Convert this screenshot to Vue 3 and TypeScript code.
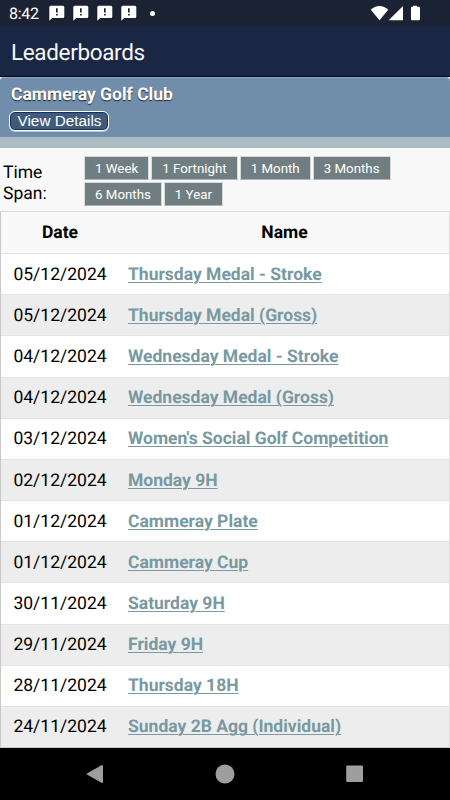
<script setup lang="ts">
interface Competition {
  date: string
  name: string
}

const notifications = [1, 2, 3, 4]
const spans: string[] = ['1 Week', '1 Fortnight', '1 Month', '3 Months', '6 Months', '1 Year']
const competitions: Competition[] = [
  { date: '05/12/2024', name: 'Thursday Medal - Stroke' },
  { date: '05/12/2024', name: 'Thursday Medal (Gross)' },
  { date: '04/12/2024', name: 'Wednesday Medal - Stroke' },
  { date: '04/12/2024', name: 'Wednesday Medal (Gross)' },
  { date: '03/12/2024', name: "Women's Social Golf Competition" },
  { date: '02/12/2024', name: 'Monday 9H' },
  { date: '01/12/2024', name: 'Cammeray Plate' },
  { date: '01/12/2024', name: 'Cammeray Cup' },
  { date: '30/11/2024', name: 'Saturday 9H' },
  { date: '29/11/2024', name: 'Friday 9H' },
  { date: '28/11/2024', name: 'Thursday 18H' },
  { date: '24/11/2024', name: 'Sunday 2B Agg (Individual)' },
]
</script>

<template>
  <div class="screen">
    <div class="status">
      <span class="clock">8:42</span>
      <svg v-for="n in notifications" :key="n" class="note" viewBox="0 0 16 16">
        <path d="M1.800 .8h12a1.500 1.500 0 0 1 1.500 1.500v9.300a1.500 1.500 0 0 1-1.500 1.500H3.300L.3 15.800V2.300A1.500 1.500 0 0 1 1.800 .8Z" fill="#fff" />
        <path d="M7 3.200h1.700v4.300H7zM7 9h1.700v1.600H7z" fill="#1b2233" />
      </svg>
      <span class="dot"></span>
      <svg class="signals" viewBox="0 0 52 16">
        <path d="M.8 4.800C5.500-.4 13.500-.4 18.200 4.800L9.500 15.300Z" fill="#fff" />
        <path d="M33 1V15.300H18.700Z" fill="#fff" />
        <path d="M43 .8h4v1h1.700c.8 0 1.300.5 1.300 1.300v10.900c0 .8-.5 1.300-1.300 1.300h-6.400c-.8 0-1.300-.5-1.300-1.300V3.100c0-.8.5-1.300 1.300-1.300H43Z" fill="#fff" />
      </svg>
    </div>
    <header class="appbar">Leaderboards</header>
    <section class="club">
      <h1>Cammeray Golf Club</h1>
      <button type="button">View Details</button>
    </section>
    <div class="strip"></div>
    <section class="filter">
      <div class="label">Time Span:</div>
      <div class="spans">
        <button v-for="s in spans" :key="s" type="button">{{ s }}</button>
      </div>
    </section>
    <div class="board">
      <div class="row head">
        <div class="date">Date</div>
        <div class="name">Name</div>
      </div>
      <div v-for="(c, i) in competitions" :key="i" class="row">
        <div class="date">{{ c.date }}</div>
        <div class="name"><a>{{ c.name }}</a></div>
      </div>
    </div>
    <nav class="nav">
      <svg viewBox="0 0 20 20"><path d="M17 2v16L2.800 10Z" fill="#9e9e9e" stroke="#9e9e9e" stroke-width="2" stroke-linejoin="round" /></svg>
      <svg viewBox="0 0 20 20"><circle cx="10" cy="10" r="9.500" fill="#9e9e9e" /></svg>
      <svg viewBox="0 0 20 20"><rect x="1.200" y="1.500" width="16.800" height="16.500" rx="1.300" fill="#9e9e9e" /></svg>
    </nav>
  </div>
</template>

<style>
body {
  margin: 0;
  background: #000;
}
</style>

<style scoped>
.screen {
  width: 450px;
  height: 800px;
  display: flex;
  flex-direction: column;
  overflow: hidden;
  background: #f9f9f9;
  font-family: Roboto, sans-serif;
  text-rendering: geometricPrecision;
  color: #000;
}
.screen * {
  box-sizing: border-box;
}
.status {
  height: 26px;
  flex: none;
  display: flex;
  align-items: center;
  padding-left: 9px;
  background: #1b2233;
  color: #fff;
}
.clock {
  width: 40px;
  font-size: 16px;
  line-height: 26px;
  padding-top: 2px;
  letter-spacing: -0.3px;
}
.note {
  width: 16px;
  height: 16px;
  margin-right: 8px;
}
.dot {
  width: 5px;
  height: 5px;
  margin-left: 5px;
  border-radius: 50%;
  background: #fff;
}
.signals {
  width: 52px;
  height: 16px;
  margin-left: auto;
  margin-right: 28px;
}
.appbar {
  height: 51px;
  flex: none;
  padding-left: 11px;
  background: #1a2744;
  border-bottom: 1px solid #030719;
  color: #f7f7f7;
  font-size: 22.500px;
  letter-spacing: -0.35px;
  line-height: 54px;
}
.club {
  height: 60px;
  flex: none;
  padding: 6px 9px 0;
  display: flex;
  flex-direction: column;
  align-items: flex-start;
  background: #718dac;
  border-top: 1px solid #8da5bf;
  border-radius: 4px 4px 0 0;
}
.club h1 {
  margin: 0 0 5px 2px;
  font-size: 17.500px;
  line-height: 22px;
  font-weight: 700;
  color: #fff;
  text-shadow: 0 1px 1px #222;
}
.club button {
  width: 100px;
  height: 20px;
  padding: 0 0 0 1px;
  border: 1px solid #fff;
  border-radius: 6px;
  background: #415a7c;
  box-shadow: inset 0 0 0 1px #142f5d, 0 1px 0 #b9c6d6;
  color: #fff;
  font: 15.300px/18px "Liberation Sans", sans-serif;
}
.strip {
  height: 11px;
  flex: none;
  background: #abbdc3;
}
.filter {
  height: 63px;
  flex: none;
  display: flex;
  padding-top: 8px;
}
.label {
  width: 84px;
  padding: 7px 24px 0 3px;
  font-size: 17.500px;
  line-height: 21px;
}
.spans {
  width: 320px;
  display: flex;
  flex-wrap: wrap;
  align-content: flex-start;
  gap: 2px;
}
.spans button {
  height: 24px;
  padding: 0 10px;
  border: 1px solid #d6dadb;
  border-bottom-color: #a9b5b8;
  background: #717e81;
  color: #fff;
  font: 13.300px/21px Roboto, sans-serif;
}
.board {
  height: 537px;
  flex: none;
  display: flex;
  flex-direction: column;
  border: 1px solid #c8c8c8;
  border-top: 1px solid #dcdcdc;
  border-right-color: #dedede;
}
.row {
  flex: 1;
  display: grid;
  grid-template-columns: 118px 1fr;
  align-items: center;
  padding-top: 1px;
  border-top: 1px solid #e4e4e4;
  background: #fff;
  font-size: 17.500px;
  line-height: 23px;
}
.row:nth-child(odd) {
  background: #ededed;
}
.row.head {
  background: #f9f9f9;
  border-top: 0;
  padding-top: 2px;
  font-weight: 700;
  text-align: center;
}
.date {
  padding-top: 1px;
  text-align: center;
}
.name {
  padding: 1px 0 0 9px;
}
.head .date {
  padding: 0;
}
.head .name {
  padding: 0 0 0 1px;
}
.name a {
  color: #7899a2;
  font-weight: 700;
  text-decoration: underline;
  text-decoration-thickness: 1px;
  text-underline-offset: 2px;
}
.nav {
  flex: 1;
  display: flex;
  justify-content: space-between;
  align-items: center;
  padding: 0 85px;
  background: #000;
}
.nav svg {
  width: 20px;
  height: 20px;
}
</style>
